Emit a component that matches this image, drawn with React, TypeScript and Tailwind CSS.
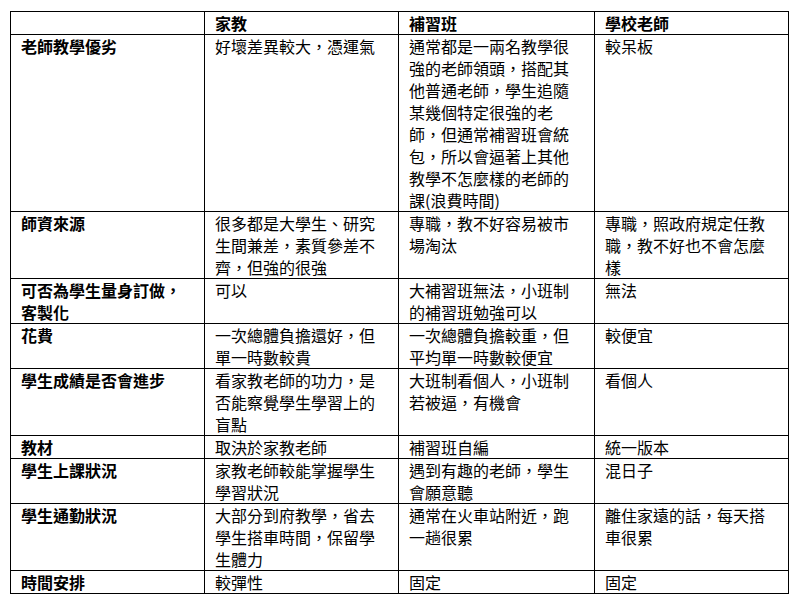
import React from "react";

const rows: [string, string, string, string][] = [
  ["老師教學優劣", "好壞差異較大，憑運氣", "通常都是一兩名教學很強的老師領頭，搭配其他普通老師，學生追隨某幾個特定很強的老師，但通常補習班會統包，所以會逼著上其他教學不怎麼樣的老師的課(浪費時間)", "較呆板"],
  ["師資來源", "很多都是大學生、研究生間兼差，素質參差不齊，但強的很強", "專職，教不好容易被市場淘汰", "專職，照政府規定任教職，教不好也不會怎麼樣"],
  ["可否為學生量身訂做，客製化", "可以", "大補習班無法，小班制的補習班勉強可以", "無法"],
  ["花費", "一次總體負擔還好，但單一時數較貴", "一次總體負擔較重，但平均單一時數較便宜", "較便宜"],
  ["學生成績是否會進步", "看家教老師的功力，是否能察覺學生學習上的盲點", "大班制看個人，小班制若被逼，有機會", "看個人"],
  ["教材", "取決於家教老師", "補習班自編", "統一版本"],
  ["學生上課狀況", "家教老師較能掌握學生學習狀況", "遇到有趣的老師，學生會願意聽", "混日子"],
  ["學生通勤狀況", "大部分到府教學，省去學生搭車時間，保留學生體力", "通常在火車站附近，跑一趟很累", "離住家遠的話，每天搭車很累"],
  ["時間安排", "較彈性", "固定", "固定"],
];

const cell = "border border-black align-top px-[10px] py-0 text-left";

export default function App() {
  return (
    <div
      className="bg-white w-[794px] h-[600px] pt-[11px] pl-[10px] text-black text-[16px] leading-[22px]"
      style={{ fontFamily: '"Noto Sans CJK TC", "Noto Sans CJK SC", sans-serif' }}
    >
      <table className="border-collapse table-fixed w-[778px]">
        <colgroup>
          <col className="w-[194px]" />
          <col className="w-[194px]" />
          <col className="w-[196px]" />
          <col className="w-[194px]" />
        </colgroup>
        <thead>
          <tr>
            <th className={`${cell} font-bold`}></th>
            <th className={`${cell} font-bold`}>家教</th>
            <th className={`${cell} font-bold`}>補習班</th>
            <th className={`${cell} font-bold`}>學校老師</th>
          </tr>
        </thead>
        <tbody>
          {rows.map((r, i) => (
            <tr key={i}>
              <td className={`${cell} font-bold`}>{r[0]}</td>
              <td className={`${cell} font-normal`}>{r[1]}</td>
              <td className={`${cell} font-normal`}>{r[2]}</td>
              <td className={`${cell} font-normal`}>{r[3]}</td>
            </tr>
          ))}
        </tbody>
      </table>
    </div>
  );
}
